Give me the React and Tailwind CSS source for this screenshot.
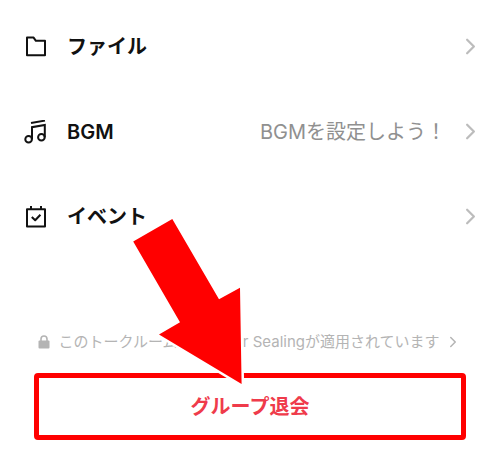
import { ChevronRight } from "lucide-react";

function FolderIcon() {
  return (
    <svg width="24" height="24" viewBox="0 0 24 24" fill="none" stroke="currentColor" strokeWidth="2" strokeLinejoin="round" aria-hidden="true">
      <path d="M3 2.6h6.6l2.3 3.2h9.1v14.4H3z" />
    </svg>
  );
}

function MusicIcon() {
  return (
    <svg width="24" height="24" viewBox="0 0 24 24" fill="none" stroke="currentColor" strokeWidth="2" aria-hidden="true">
      <path d="M7 3 21 .6" />
      <path d="M8 19.2V7.2L20.8 5v12.2" />
      <circle cx="4.6" cy="19.2" r="3.3" />
      <circle cx="17.4" cy="17.2" r="3.3" />
    </svg>
  );
}

function EventIcon() {
  return (
    <svg width="24" height="24" viewBox="0 0 24 24" fill="none" stroke="currentColor" strokeWidth="2" strokeLinejoin="round" aria-hidden="true">
      <path d="M3 4.2h18v17.3H3zM7 1v3M17 1v3" />
      <path d="m7.8 12 3.4 3.3 5.2-5.5" />
    </svg>
  );
}

function LockIcon() {
  return (
    <svg width="12" height="14" viewBox="0 0 12 14" aria-hidden="true">
      <path d="M3 6V4a3 3 0 0 1 6 0v2" fill="none" stroke="currentColor" strokeWidth="1.6" />
      <rect x="0.5" y="5.4" width="11" height="8" rx="1" fill="currentColor" />
    </svg>
  );
}

// Pointer that leads down to the leave button
function Arrow() {
  return (
    <svg
      className="pointer-events-none absolute bottom-[53px] left-1/2 -translate-x-full"
      width="120"
      height="172"
      viewBox="0 0 120 172"
      aria-hidden="true"
    >
      <path
        d="M42.3 4 89 84.3 110 72.8 111.6 169 29 119.6 50 107.2 3.2 26.6Z"
        fill="#ff0000"
        stroke="#ffffff"
        strokeWidth="5"
        paintOrder="stroke"
      />
    </svg>
  );
}

const menuItems = [
  { label: "ファイル", icon: FolderIcon },
  { label: "BGM", icon: MusicIcon, value: "BGMを設定しよう！" },
  { label: "イベント", icon: EventIcon },
];

function MenuRow({ label, icon: Icon, value }) {
  return (
    <li>
      <button type="button" className="flex h-[85px] w-full items-center pr-4 pl-6 text-left">
        <Icon />
        <span className="ml-[19px] text-[20px] font-semibold">{label}</span>
        {value && <span className="ml-auto text-[20px] text-[#909090]">{value}</span>}
        <ChevronRight
          size={27}
          strokeWidth={2}
          className={`text-[#bcbcbc] ${value ? "ml-[11px]" : "ml-auto"}`}
        />
      </button>
    </li>
  );
}

export default function App() {
  return (
    <main className="min-h-screen bg-white pt-1 font-['Inter','Noto_Sans_CJK_JP',sans-serif] text-[#111111]" lang="ja">
      <ul>
        {menuItems.map((item) => (
          <MenuRow key={item.label} {...item} />
        ))}
      </ul>

      <a href="#letter-sealing" className="mt-[71px] flex h-6 items-center justify-center text-[15px] whitespace-nowrap text-[#b4b4b4]">
        <LockIcon />
        <span className="ml-2">このトークルームにはLetter Sealingが適用されています</span>
        <ChevronRight size={18} strokeWidth={2} className="ml-1" />
      </a>

      <div className="relative mx-[34px] mt-[19px]">
        <button
          type="button"
          className="h-[67px] w-full rounded-[4px] border-5 border-[#ff0000] text-[20px] font-semibold text-[#ef3b4b]"
        >
          グループ退会
        </button>
        <Arrow />
      </div>
    </main>
  );
}
